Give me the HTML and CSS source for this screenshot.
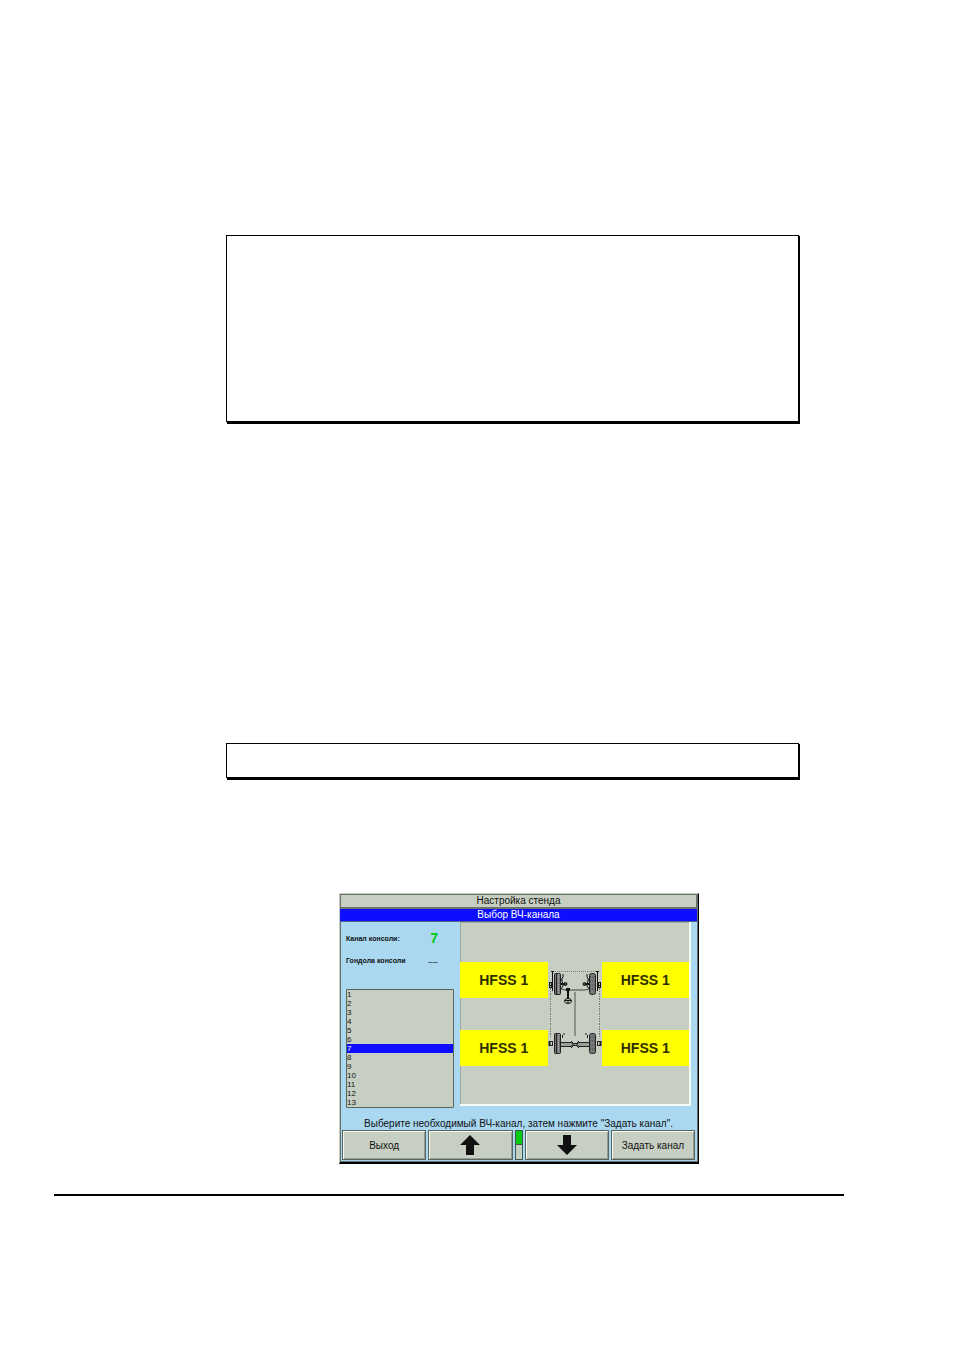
FILE: index.html
```
<!DOCTYPE html>
<html lang="ru">
  <head>
    <meta charset="utf-8" />
    <meta name="viewport" content="width=device-width, initial-scale=1" />
    <title>Настройка стенда</title>
    <link rel="stylesheet" href="styles.css">
  </head>
  <body>
    <main class="page">
      <div class="note note-large"></div>
      <div class="note note-small"></div>

      <section class="screen">
        <h1 class="title">Настройка стенда</h1>
        <h2 class="subtitle">Выбор ВЧ-канала</h2>

        <div class="content">
          <div class="sidebar">
            <div class="field">
              <span>Канал консоли:</span>
              <output class="channel">7</output>
            </div>
            <div class="field">
              <span>Гондола консоли</span>
              <output class="pod">.....</output>
            </div>
            <select class="channels" size="13" aria-label="Канал">
              <option>1</option>
              <option>2</option>
              <option>3</option>
              <option>4</option>
              <option>5</option>
              <option>6</option>
              <option selected>7</option>
              <option>8</option>
              <option>9</option>
              <option>10</option>
              <option>11</option>
              <option>12</option>
              <option>13</option>
            </select>
          </div>

          <div class="sensors">
            <div class="sensor">HFSS 1</div>
            <svg class="chassis" viewBox="0 0 54 104" width="54" height="104">
              <!-- measuring beams -->
              <g fill="none" stroke="#777c75">
                <path d="M5 9.500H49" stroke-dasharray="1 1" />
                <path d="M2.500 26V76M51.500 26V76" stroke-dasharray="2 1 1 1" />
              </g>
              <path d="M27 30V74" stroke="#8b918a" stroke-width="2" />

              <!-- front axle -->
              <g fill="#777" stroke="#222">
                <rect x="6.500" y="11.500" width="6" height="21" rx="1" />
                <rect x="41.500" y="11.500" width="6" height="21" rx="2" />
              </g>
              <path d="M8.500 12V32" stroke="#222" />
              <path d="M10.500 12V32" stroke="#bbb" stroke-dasharray="1 1" />
              <path d="M42 15h5M42 19h5M42 23h5M42 27h5" stroke="#444" stroke-dasharray="1 1" />
              <g fill="none" stroke="#111">
                <path d="M3 9.500h3M4.500 9V29M48 9.500h3M49.500 9V29" />
                <path d="M1 23.500h4M49 23.500h4" />
                <rect x="1.500" y="20.500" width="2" height="5" />
                <rect x="50.500" y="20.500" width="2" height="5" />
                <path d="M13 18l2-3v-3M14 17v3l2 2-3 5M41 18l-2-3v-3M40 17v3l-2 2 3 5" />
                <circle cx="17.500" cy="22" r="1.500" fill="#555" />
                <circle cx="36.500" cy="22" r="1.500" fill="#555" />
                <path d="M13 22h4M37 22h4" stroke-width="2" />
                <path d="M13 27l4 1h20l4-1" stroke="#444" />
                <path d="M20 27v10" stroke-width="2" />
                <ellipse cx="20" cy="39" rx="3.500" ry="2.500" />
                <path d="M17 38.500h6M20 38v3" />
              </g>
              <rect x="18" y="26" width="4" height="3" fill="#111" />

              <!-- rear axle -->
              <g fill="#777" stroke="#222">
                <rect x="6.500" y="71.500" width="6" height="20" rx="1" />
                <rect x="41.500" y="71.500" width="6" height="20" rx="2" />
              </g>
              <path d="M8.500 72V91" stroke="#222" />
              <path d="M10.500 72V91" stroke="#bbb" stroke-dasharray="1 1" />
              <path d="M42 75h5M42 79h5M42 83h5M42 87h5" stroke="#444" stroke-dasharray="1 1" />
              <path d="M13 82.500H41" stroke="#9aa098" stroke-width="3" />
              <g fill="none" stroke="#222">
                <path d="M13 80.500h10l2 1h4l2-1h10M13 84.500h10l2-1h4l2 1h10" />
                <path d="M15 72h2M14.500 73v3M37 72h2M39.500 73v3" />
                <path d="M23 79l2 2v3l-2 2M31 79l-2 2v3l2 2" />
                <rect x="1.500" y="79.500" width="3" height="4" />
                <rect x="49.500" y="79.500" width="3" height="4" />
                <path d="M1.500 79v5M52.500 79v5" stroke-width="2" />
              </g>
            </svg>
            <div class="sensor">HFSS 1</div>
            <div class="sensor">HFSS 1</div>
            <div class="sensor">HFSS 1</div>
          </div>
        </div>

        <p class="hint">Выберите необходимый ВЧ-канал, затем нажмите "Задать канал".</p>

        <div class="buttons">
          <button type="button">Выход</button>
          <button type="button" aria-label="Вверх">
            <svg viewBox="0 0 20 20" width="20" height="20"><path d="M10 0L20 10H14V20H6V10H0Z" fill="#111" /></svg>
          </button>
          <div class="gauge"></div>
          <button type="button" aria-label="Вниз">
            <svg viewBox="0 0 20 20" width="20" height="20"><path d="M10 20L20 10H14V0H6V10H0Z" fill="#111" /></svg>
          </button>
          <button type="button">Задать канал</button>
        </div>
      </section>

      <hr class="rule" />
    </main>
  </body>
</html>
```
FILE: styles.css
```
* {
  box-sizing: border-box;
}

body {
  margin: 0;
  background: #fff;
  color: #111;
  font-family: "Liberation Sans", Arial, sans-serif;
}

.page {
  display: flex;
  flex-direction: column;
  padding: 235px 110px 154px 54px;
}

.note {
  margin: 0 45px 0 172px;
  border: 1px solid #000;
  box-shadow: 1px 1px #000, 1px 2px #000;
}

.note-large {
  min-height: 187px;
}

.note-small {
  min-height: 35px;
  margin-top: 321px;
}

.screen {
  margin: 115px 145px 0 285px;
  padding: 0 1px 1px 0;
  border: 1px solid #c5ccc0;
  border-right: 1px solid #000;
  border-bottom: 2px solid #000;
  background: #a9d8f0;
  box-shadow: inset -1px -1px #65706c, inset 1px 1px #65706c;
}

.title,
.subtitle {
  margin: 0;
  font-size: 10px;
  font-weight: normal;
  line-height: 12px;
  text-align: center;
}

.title {
  border: 1px solid #6b736a;
  border-bottom-width: 2px;
  background: #c7cfc3;
}

.subtitle {
  border-bottom: 1px solid #52658c;
  background: #0d0dff;
  color: #fff;
}

.content {
  display: flex;
  gap: 6px;
  padding: 0 6px;
}

.sidebar {
  flex: 0 0 108px;
  padding-top: 5px;
}

.field {
  display: flex;
  align-items: center;
  justify-content: space-between;
  height: 22px;
  padding-right: 16px;
  font-size: 7px;
  font-weight: bold;
}

.channel {
  color: #0c1;
  font-size: 14px;
}

.channels {
  display: block;
  width: 100%;
  height: 119px;
  margin-top: 18px;
  padding: 0;
  border: 1px solid #59645f;
  border-radius: 1px;
  background: #c7cfc3;
  color: #111;
  font: 8px "Liberation Sans", Arial, sans-serif;
  overflow: hidden;
  outline: 0;
}

.channels option {
  height: 9px;
  min-height: 9px;
  padding: 0;
  line-height: 9px;
}

.channels option:checked {
  background: linear-gradient(#0d0dff, #0d0dff);
  color: #fff;
}

.sensors {
  flex: 1;
  display: grid;
  grid-template-columns: 1fr 54px 1fr;
  grid-template-rows: 36px 36px;
  row-gap: 32px;
  align-content: start;
  height: 184px;
  padding-top: 40px;
  border-right: 2px solid #f7faf2;
  border-bottom: 2px solid #f7faf2;
  background: #c7cfc3;
  box-shadow: inset 1px 1px #9fa79e;
}

.sensor {
  display: flex;
  align-items: center;
  justify-content: center;
  background: #ff0;
  color: #2e2e00;
  font-size: 14px;
  font-weight: bold;
}

.chassis {
  grid-column: 2;
  grid-row: 1 / 3;
}

.hint {
  margin: 10px 0 0;
  font-size: 10px;
  line-height: 12px;
  text-align: center;
}

.buttons {
  display: flex;
  gap: 2px;
  padding: 0 2px 1px;
}

.buttons button {
  display: flex;
  flex: 1 1 0;
  align-items: center;
  justify-content: center;
  height: 30px;
  padding: 0;
  border: 1px solid #59645f;
  background: #c7cfc3;
  box-shadow: inset 1px 1px #f4f8ee, inset -1px -1px #949d93;
  color: #111;
  font: 10px "Liberation Sans", Arial, sans-serif;
}

.gauge {
  flex: 0 0 8px;
  height: 30px;
  border: 1px solid #3f5948;
  background: linear-gradient(#0c1 13px, #3f5948 13px, #3f5948 14px, #c7cfc3 14px);
}

.rule {
  width: 100%;
  margin: 30px 0 0;
  border: 0;
  border-top: 2px solid #000;
}
```
